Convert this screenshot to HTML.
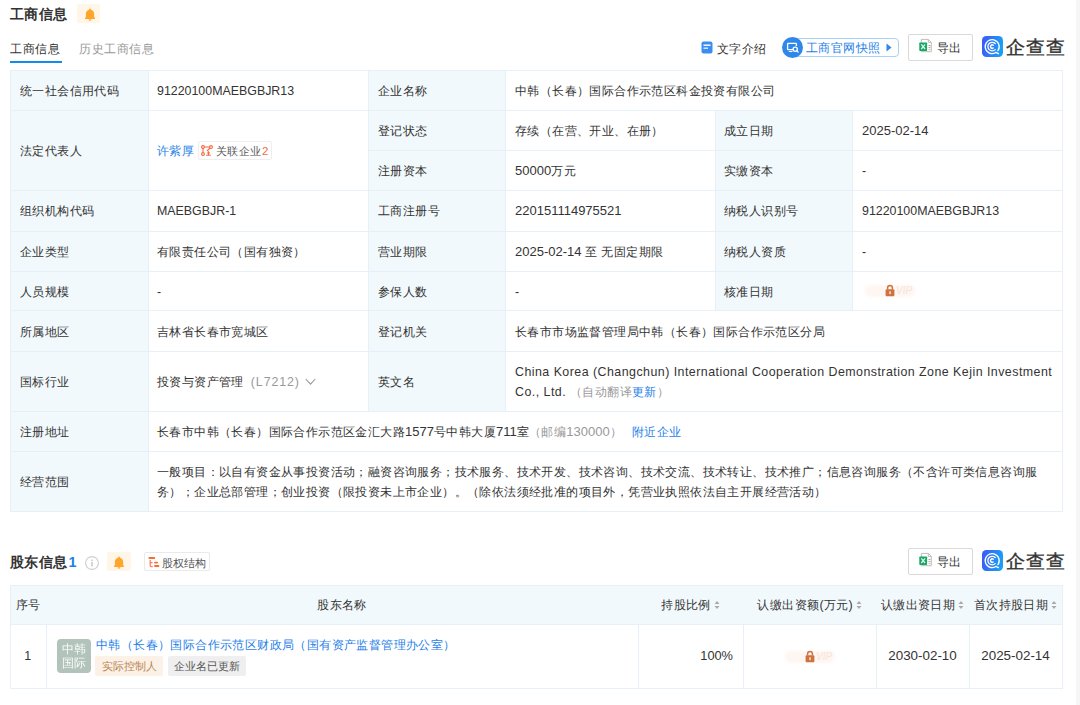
<!DOCTYPE html>
<html><head><meta charset="utf-8"><style>
*{margin:0;padding:0;box-sizing:border-box}
html,body{width:1080px;height:705px;overflow:hidden;background:#fff}
body{position:relative;font-family:"Liberation Sans",sans-serif;color:#333;font-size:12.4px}
i,.a{position:absolute;display:block}
.t{position:absolute;white-space:nowrap;line-height:20px;height:20px;letter-spacing:0.4px}
.l{letter-spacing:0}
.lb{position:absolute;background:#f2f9fc}
.hl{height:1px;background:#e8f0f7}
.vl{width:1px;background:#e8f0f7}
.blue{color:#1f7fe9}
.gray{color:#999}
svg{position:absolute;display:block}
</style></head><body>
<i style="left:1076px;top:0;width:4px;height:705px;background:#f6f6f6"></i>
<div class="t" style="left:10px;top:4px;font-size:14.4px;font-weight:bold;letter-spacing:0.4px">工商信息</div>
<i style="left:77px;top:4px;width:23px;height:19px;background:#fff6e8;border-radius:2px"></i>
<svg style="left:84.5px;top:7.5px" width="10" height="13" viewBox="0 0 10 13"><path d="M5 0.6c.5 0 .9.4.9.9v.3c1.9.4 3.2 2 3.2 4v3.3l1 1.3v.7H-.1v-.7l1-1.3V5.8c0-2 1.3-3.6 3.2-4v-.3c0-.5.4-.9.9-.9zM3.6 11.3h2.8c0 .8-.6 1.4-1.4 1.4s-1.4-.6-1.4-1.4z" fill="#ffa52a"/></svg>
<div class="t " style="left:10px;top:38.5px;font-size:12.4px;letter-spacing:0.5px">工商信息</div>
<div class="t gray" style="left:79px;top:38.5px;font-size:12.4px;letter-spacing:0.5px">历史工商信息</div>
<i style="left:10px;top:61px;width:52px;height:2px;background:#128bed"></i>
<svg style="left:701px;top:41px" width="12" height="13" viewBox="0 0 12 13"><rect x="0.5" y="0.5" width="11" height="12" rx="2" fill="#3b8ef0"/><rect x="2.5" y="3.5" width="7" height="1.4" fill="#fff"/><rect x="2.5" y="6.5" width="4.5" height="1.4" fill="#fff" opacity=".85"/></svg>
<div class="t " style="left:717px;top:39px;">文字介绍</div>
<i style="left:790px;top:38px;width:109px;height:19px;border:1px solid #a9d2f7;border-radius:4px"></i>
<svg style="left:782px;top:37px" width="21" height="21" viewBox="0 0 21 21"><circle cx="10.5" cy="10.5" r="10.5" fill="#2f87ea"/><path d="M11.2 12.6H6.2a0.6 0.6 0 0 1-0.6-0.6V6.9a0.6 0.6 0 0 1 0.6-0.6h7.6a0.6 0.6 0 0 1 0.6 0.6v2" fill="none" stroke="#fff" stroke-width="1.3"/><path d="M6.8 14.5h3.6" stroke="#fff" stroke-width="1.1"/><circle cx="13.2" cy="12.2" r="2.1" fill="none" stroke="#fff" stroke-width="1.3"/><path d="M14.7 13.7l1.4 1.4" stroke="#fff" stroke-width="1.3" stroke-linecap="round"/></svg>
<div class="t blue" style="left:806px;top:37.5px;font-size:12.4px">工商官网快照</div>
<svg style="left:885.5px;top:43px" width="6" height="9" viewBox="0 0 6 9"><path d="M0.5 0.5L5.5 4.5L0.5 8.5z" fill="#2f87ea"/></svg>
<i style="left:908px;top:34px;width:65px;height:27px;border:1px solid #d9d9d9;border-radius:2px"></i>
<svg style="left:918.5px;top:38px" width="14" height="15" viewBox="0 0 14 15"><path d="M2.3 1.4h7l3 3v9.3h-10z" fill="#fff" stroke="#bdbdbd" stroke-width="1"/><path d="M9.3 1.4v3h3" fill="none" stroke="#bdbdbd" stroke-width="1"/><rect x="9.5" y="7" width="2" height="0.9" fill="#999"/><rect x="9.5" y="9.2" width="2" height="0.9" fill="#999"/><rect x="9.5" y="11.2" width="2" height="0.9" fill="#bbb"/><rect x="0.3" y="4.4" width="7.8" height="8.6" rx="0.8" fill="#15a864"/><path d="M2.3 6.4l3.8 4.6M6.1 6.4l-3.8 4.6" stroke="#e8f8ef" stroke-width="1.2"/></svg>
<div class="t " style="left:937px;top:37.5px;font-size:12.4px">导出</div>
<svg style="left:982px;top:36px" width="21" height="21" viewBox="0 0 21 21"><defs><linearGradient id="lg34" x1="0" y1="0" x2="1" y2="0.2"><stop offset="0" stop-color="#3d55f7"/><stop offset="1" stop-color="#1b9ef5"/></linearGradient></defs><rect width="21" height="21" rx="4.5" fill="url(#lg34)"/><g fill="none" stroke="#fff" stroke-linecap="round"><path d="M15.93 14.61A7 7 0 1 0 13.49 16.78" stroke-width="1.3"/><path d="M13.9 16.4L16.4 17.6" stroke-width="1.3"/><path d="M13.24 7.56A4.3 4.3 0 1 0 13.24 13.64" stroke-width="1.3"/><path d="M11.18 9.21A1.7 1.7 0 1 0 11.18 11.99" stroke-width="1.5"/></g></svg>
<div class="t" style="left:1005.5px;top:37px;font-size:19px;line-height:22px;height:22px;letter-spacing:1px;-webkit-text-stroke:0.4px #333">企查查</div>
<div class="lb" style="left:10px;top:70px;width:138px;height:441px"></div>
<div class="lb" style="left:368px;top:70px;width:137px;height:341px"></div>
<div class="lb" style="left:715px;top:110px;width:137px;height:200px"></div>
<i class="hl" style="left:10px;top:70px;width:1053px"></i>
<i class="hl" style="left:10px;top:110px;width:1053px"></i>
<i class="hl" style="left:368px;top:150px;width:695px"></i>
<i class="hl" style="left:10px;top:190px;width:1053px"></i>
<i class="hl" style="left:10px;top:231px;width:1053px"></i>
<i class="hl" style="left:10px;top:271px;width:1053px"></i>
<i class="hl" style="left:10px;top:310px;width:1053px"></i>
<i class="hl" style="left:10px;top:351px;width:1053px"></i>
<i class="hl" style="left:10px;top:411px;width:1053px"></i>
<i class="hl" style="left:10px;top:451px;width:1053px"></i>
<i class="hl" style="left:10px;top:511px;width:1053px"></i>
<i class="vl" style="left:10px;top:70px;height:442px"></i>
<i class="vl" style="left:1062px;top:70px;height:442px"></i>
<i class="vl" style="left:148px;top:70px;height:442px"></i>
<i class="vl" style="left:368px;top:70px;height:342px"></i>
<i class="vl" style="left:505px;top:70px;height:342px"></i>
<i class="vl" style="left:715px;top:110px;height:201px"></i>
<i class="vl" style="left:852px;top:110px;height:201px"></i>
<div class="t " style="left:20px;top:81px;">统一社会信用代码</div>
<div class="t " style="left:157px;top:81px;"><span class="l">91220100MAEBGBJR13</span></div>
<div class="t " style="left:378px;top:81px;">企业名称</div>
<div class="t " style="left:515px;top:81px;">中韩（长春）国际合作示范区科金投资有限公司</div>
<div class="t " style="left:20px;top:141px;">法定代表人</div>
<div class="t blue" style="left:157px;top:141px;">许紫厚</div>
<i style="left:198px;top:141px;width:74px;height:19px;border:1px solid #eee;border-radius:2px"></i>
<svg style="left:201px;top:145px" width="12" height="11" viewBox="0 0 12 11"><g fill="none" stroke="#f5683f" stroke-width="1.1"><circle cx="2" cy="2" r="1.4"/><circle cx="10" cy="2" r="1.4"/><circle cx="2" cy="9" r="1.4"/><path d="M3.4 2h5.2M2 3.4v4.2M9 3l-3 3"/><path d="M5.2 10.2h4.6M7.5 6.2v4M6 8h3"/></g></svg>
<div class="t " style="left:216px;top:140.5px;font-size:10.8px;color:#555;letter-spacing:0.4px">关联企业</div>
<div class="t " style="left:262px;top:140.5px;font-size:11.5px;color:#f5683f"><span class="l">2</span></div>
<div class="t " style="left:378px;top:121px;">登记状态</div>
<div class="t " style="left:515px;top:121px;">存续（在营、开业、在册）</div>
<div class="t " style="left:724px;top:121px;">成立日期</div>
<div class="t " style="left:862px;top:121px;"><span class="l" style="font-size:13px">2025-02-14</span></div>
<div class="t " style="left:378px;top:161px;">注册资本</div>
<div class="t " style="left:515px;top:161px;"><span class="l" style="font-size:13px">50000</span>万元</div>
<div class="t " style="left:724px;top:161px;">实缴资本</div>
<div class="t " style="left:862px;top:161px;"><span class="l">-</span></div>
<div class="t " style="left:20px;top:201px;">组织机构代码</div>
<div class="t " style="left:157px;top:201px;"><span class="l">MAEBGBJR-1</span></div>
<div class="t " style="left:378px;top:201px;">工商注册号</div>
<div class="t " style="left:515px;top:201px;"><span class="l" style="font-size:13px">220151114975521</span></div>
<div class="t " style="left:724px;top:201px;">纳税人识别号</div>
<div class="t " style="left:862px;top:201px;"><span class="l">91220100MAEBGBJR13</span></div>
<div class="t " style="left:20px;top:242px;">企业类型</div>
<div class="t " style="left:157px;top:242px;">有限责任公司（国有独资）</div>
<div class="t " style="left:378px;top:242px;">营业期限</div>
<div class="t " style="left:515px;top:242px;"><span class="l" style="font-size:13px">2025-02-14 </span>至 无固定期限</div>
<div class="t " style="left:724px;top:242px;">纳税人资质</div>
<div class="t " style="left:862px;top:242px;"><span class="l">-</span></div>
<div class="t " style="left:20px;top:281.5px;">人员规模</div>
<div class="t " style="left:157px;top:281.5px;"><span class="l">-</span></div>
<div class="t " style="left:378px;top:281.5px;">参保人数</div>
<div class="t " style="left:515px;top:281.5px;"><span class="l">-</span></div>
<div class="t " style="left:724px;top:281.5px;">核准日期</div>
<i style="left:865px;top:285px;width:50px;height:12px;border-radius:6px;background:#fef6f1;filter:blur(1.5px)"></i>
<svg style="left:885px;top:284px" width="10" height="13" viewBox="0 0 10 13"><path d="M2.6 5.5V3.8a2.4 2.4 0 0 1 4.8 0v1.7" fill="none" stroke="#cd7340" stroke-width="1.5"/><rect x="0.6" y="5.3" width="8.8" height="7" rx="1" fill="#cd7340"/><rect x="4.4" y="7.3" width="1.2" height="2.8" fill="#fff"/></svg>
<div class="t" style="left:896px;top:281px;font-size:10px;color:#f8e4d9;font-style:italic;letter-spacing:0">VIP</div>
<div class="t " style="left:20px;top:321.5px;">所属地区</div>
<div class="t " style="left:157px;top:321.5px;">吉林省长春市宽城区</div>
<div class="t " style="left:378px;top:321.5px;">登记机关</div>
<div class="t " style="left:515px;top:321.5px;">长春市市场监督管理局中韩（长春）国际合作示范区分局</div>
<div class="t " style="left:20px;top:372px;">国标行业</div>
<div class="t " style="left:157px;top:372px;">投资与资产管理<span class="gray" style="margin-left:7px;letter-spacing:0.9px">(L7212)</span></div>
<div class="t " style="left:378px;top:372px;">英文名</div>
<svg style="left:305px;top:378px" width="11" height="8" viewBox="0 0 11 8"><path d="M0.7 1l4.8 5.2L10.3 1" fill="none" stroke="#999" stroke-width="1.1"/></svg>
<div class="t " style="left:515px;top:362px;letter-spacing:0.47px">China Korea (Changchun) International Cooperation Demonstration Zone Kejin Investment</div>
<div class="t " style="left:515px;top:382px;"><span style="letter-spacing:0.47px">Co., Ltd. </span><span class="gray">（自动翻译</span><span class="blue">更新</span><span class="gray">）</span></div>
<div class="t " style="left:20px;top:422px;">注册地址</div>
<div class="t " style="left:157px;top:422px;">长春市中韩（长春）国际合作示范区金汇大路<span class="l" style="font-size:13px">1577</span>号中韩大厦<span class="l" style="font-size:13px">711</span>室<span class="gray">（邮编<span class="l" style="font-size:13px">130000</span>）</span></div>
<div class="t blue" style="left:632px;top:422px;">附近企业</div>
<div class="t " style="left:20px;top:472px;">经营范围</div>
<div class="t " style="left:157px;top:462px;">一般项目：以自有资金从事投资活动；融资咨询服务；技术服务、技术开发、技术咨询、技术交流、技术转让、技术推广；信息咨询服务（不含许可类信息咨询服</div>
<div class="t " style="left:157px;top:482px;">务）；企业总部管理；创业投资（限投资未上市企业）。（除依法须经批准的项目外，凭营业执照依法自主开展经营活动）</div>
<div class="t" style="left:10px;top:552px;font-size:14.4px;font-weight:bold;letter-spacing:0.4px">股东信息<span class="blue l" style="margin-left:1px">1</span></div>
<svg style="left:85px;top:556px" width="14" height="14" viewBox="0 0 14 14"><circle cx="7" cy="7" r="6.4" fill="none" stroke="#cfcfcf" stroke-width="1.1"/><circle cx="7" cy="4.2" r="0.8" fill="#bbb"/><rect x="6.4" y="5.9" width="1.2" height="4.6" fill="#bbb"/></svg>
<i style="left:107px;top:552px;width:24px;height:19px;background:#fff6e8;border-radius:2px"></i>
<svg style="left:114px;top:555.5px" width="10" height="13" viewBox="0 0 10 13"><path d="M5 0.6c.5 0 .9.4.9.9v.3c1.9.4 3.2 2 3.2 4v3.3l1 1.3v.7H-.1v-.7l1-1.3V5.8c0-2 1.3-3.6 3.2-4v-.3c0-.5.4-.9.9-.9zM3.6 11.3h2.8c0 .8-.6 1.4-1.4 1.4s-1.4-.6-1.4-1.4z" fill="#ffa52a"/></svg>
<i style="left:144px;top:552px;width:66px;height:19px;border:1px solid #eaeaea;border-radius:2px"></i>
<svg style="left:145px;top:554px" width="18" height="16" viewBox="0 0 18 16"><rect x="3.4" y="3" width="6.8" height="1.9" rx="0.9" fill="#ff6a2c"/><path d="M5.2 5.9V11.6q0 1.1 1.1 1.1H7.8M5.2 8.7H7.6" fill="none" stroke="#ff7d70" stroke-width="1.3"/><rect x="9.1" y="7.7" width="3.9" height="1.8" rx="0.9" fill="#ff6a2c"/><rect x="9.1" y="11.1" width="5.2" height="1.9" rx="0.9" fill="#ff6a2c"/></svg>
<div class="t " style="left:162px;top:553px;font-size:11px;letter-spacing:-0.1px;color:#555">股权结构</div>
<i style="left:908px;top:548px;width:65px;height:27px;border:1px solid #d9d9d9;border-radius:2px"></i>
<svg style="left:918.5px;top:552px" width="14" height="15" viewBox="0 0 14 15"><path d="M2.3 1.4h7l3 3v9.3h-10z" fill="#fff" stroke="#bdbdbd" stroke-width="1"/><path d="M9.3 1.4v3h3" fill="none" stroke="#bdbdbd" stroke-width="1"/><rect x="9.5" y="7" width="2" height="0.9" fill="#999"/><rect x="9.5" y="9.2" width="2" height="0.9" fill="#999"/><rect x="9.5" y="11.2" width="2" height="0.9" fill="#bbb"/><rect x="0.3" y="4.4" width="7.8" height="8.6" rx="0.8" fill="#15a864"/><path d="M2.3 6.4l3.8 4.6M6.1 6.4l-3.8 4.6" stroke="#e8f8ef" stroke-width="1.2"/></svg>
<div class="t " style="left:937px;top:551.5px;font-size:12.4px">导出</div>
<svg style="left:982px;top:550px" width="21" height="21" viewBox="0 0 21 21"><defs><linearGradient id="lg548" x1="0" y1="0" x2="1" y2="0.2"><stop offset="0" stop-color="#3d55f7"/><stop offset="1" stop-color="#1b9ef5"/></linearGradient></defs><rect width="21" height="21" rx="4.5" fill="url(#lg548)"/><g fill="none" stroke="#fff" stroke-linecap="round"><path d="M15.93 14.61A7 7 0 1 0 13.49 16.78" stroke-width="1.3"/><path d="M13.9 16.4L16.4 17.6" stroke-width="1.3"/><path d="M13.24 7.56A4.3 4.3 0 1 0 13.24 13.64" stroke-width="1.3"/><path d="M11.18 9.21A1.7 1.7 0 1 0 11.18 11.99" stroke-width="1.5"/></g></svg>
<div class="t" style="left:1005.5px;top:551px;font-size:19px;line-height:22px;height:22px;letter-spacing:1px;-webkit-text-stroke:0.4px #333">企查查</div>
<div class="lb" style="left:10px;top:585px;width:1052px;height:39px"></div>
<i class="hl" style="left:10px;top:585px;width:1053px"></i>
<i class="hl" style="left:10px;top:624px;width:1053px"></i>
<i class="hl" style="left:10px;top:688px;width:1053px"></i>
<i class="vl" style="left:10px;top:585px;height:104px"></i>
<i class="vl" style="left:1062px;top:585px;height:104px"></i>
<i class="vl" style="left:46px;top:624px;height:65px"></i>
<i class="vl" style="left:638px;top:624px;height:65px"></i>
<i class="vl" style="left:743px;top:624px;height:65px"></i>
<i class="vl" style="left:876px;top:624px;height:65px"></i>
<i class="vl" style="left:969px;top:624px;height:65px"></i>
<div class="t" style="left:10px;top:595px;width:36px;text-align:center">序号</div>
<div class="t" style="left:46px;top:595px;width:592px;text-align:center">股东名称</div>
<div class="t" style="left:638px;top:595px;width:105px;text-align:center">持股比例<svg width="6" height="10" viewBox="0 0 6 10" style="position:relative;display:inline-block;vertical-align:-1px;margin-left:3px"><path d="M0.5 4L3 1l2.5 3zM0.5 6L3 9l2.5-3z" fill="#aaa"/></svg></div>
<div class="t" style="left:743px;top:595px;width:133px;text-align:center">认缴出资额<span class="l">(</span>万元<span class="l">)</span><svg width="6" height="10" viewBox="0 0 6 10" style="position:relative;display:inline-block;vertical-align:-1px;margin-left:3px"><path d="M0.5 4L3 1l2.5 3zM0.5 6L3 9l2.5-3z" fill="#aaa"/></svg></div>
<div class="t" style="left:876px;top:595px;width:93px;text-align:center">认缴出资日期<svg width="6" height="10" viewBox="0 0 6 10" style="position:relative;display:inline-block;vertical-align:-1px;margin-left:3px"><path d="M0.5 4L3 1l2.5 3zM0.5 6L3 9l2.5-3z" fill="#aaa"/></svg></div>
<div class="t" style="left:969px;top:595px;width:93px;text-align:center">首次持股日期<svg width="6" height="10" viewBox="0 0 6 10" style="position:relative;display:inline-block;vertical-align:-1px;margin-left:3px"><path d="M0.5 4L3 1l2.5 3zM0.5 6L3 9l2.5-3z" fill="#aaa"/></svg></div>
<div class="t" style="left:10px;top:646px;width:36px;text-align:center">1</div>
<i style="left:57px;top:639px;width:34px;height:34px;background:#b2c3bb;border-radius:4px"></i>
<div class="t" style="left:62px;top:642px;font-size:11.5px;line-height:14px;height:30px;color:#fff;letter-spacing:0;opacity:.92">中韩<br>国际</div>
<div class="t blue" style="left:96px;top:635px;">中韩（长春）国际合作示范区财政局（国有资产监督管理办公室）</div>
<i style="left:95px;top:656px;width:68px;height:20px;background:#fcf1e6;border-radius:2px"></i>
<div class="t" style="left:95px;top:656px;width:68px;text-align:center;font-size:11px;color:#b98553;letter-spacing:0">实际控制人</div>
<i style="left:168px;top:656px;width:78px;height:20px;background:#efefef;border-radius:2px"></i>
<div class="t" style="left:168px;top:656px;width:78px;text-align:center;font-size:11px;color:#555;letter-spacing:0">企业名已更新</div>
<div class="t" style="left:638px;top:646px;width:95px;text-align:right;letter-spacing:0;font-size:12.8px">100%</div>
<i style="left:785px;top:651px;width:50px;height:12px;border-radius:6px;background:#fef6f1;filter:blur(1.5px)"></i>
<svg style="left:805px;top:650px" width="10" height="13" viewBox="0 0 10 13"><path d="M2.6 5.5V3.8a2.4 2.4 0 0 1 4.8 0v1.7" fill="none" stroke="#cd7340" stroke-width="1.5"/><rect x="0.6" y="5.3" width="8.8" height="7" rx="1" fill="#cd7340"/><rect x="4.4" y="7.3" width="1.2" height="2.8" fill="#fff"/></svg>
<div class="t" style="left:816px;top:647px;font-size:10px;color:#f8e4d9;font-style:italic;letter-spacing:0">VIP</div>
<div class="t" style="left:876px;top:646px;width:93px;text-align:center;letter-spacing:0;font-size:13.4px">2030-02-10</div>
<div class="t" style="left:969px;top:646px;width:93px;text-align:center;letter-spacing:0;font-size:13.4px">2025-02-14</div>
</body></html>
